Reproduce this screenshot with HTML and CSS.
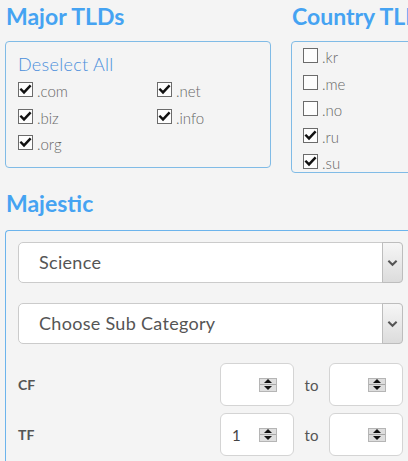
FILE: index.html
```html
<!DOCTYPE html>
<html>
<head>
<meta charset="utf-8">
<link rel="stylesheet" href="styles.css">
</head>
<body>
<div class="top">
  <section class="col">
    <h2 class="title">Major TLDs</h2>
    <div class="box major">
      <div class="deselect">Deselect All</div>
      <div class="grid">
        <div class="item"><span class="cb on"><svg viewBox="0 0 13 13"><path d="M2.2 6.6 L5 9.4 L10.8 3.2"/></svg></span><span class="lbl">.com</span></div>
        <div class="item"><span class="cb on"><svg viewBox="0 0 13 13"><path d="M2.2 6.6 L5 9.4 L10.8 3.2"/></svg></span><span class="lbl">.net</span></div>
        <div class="item"><span class="cb on"><svg viewBox="0 0 13 13"><path d="M2.2 6.6 L5 9.4 L10.8 3.2"/></svg></span><span class="lbl">.biz</span></div>
        <div class="item"><span class="cb on"><svg viewBox="0 0 13 13"><path d="M2.2 6.6 L5 9.4 L10.8 3.2"/></svg></span><span class="lbl">.info</span></div>
        <div class="item"><span class="cb on"><svg viewBox="0 0 13 13"><path d="M2.2 6.6 L5 9.4 L10.8 3.2"/></svg></span><span class="lbl">.org</span></div>
      </div>
    </div>
  </section>
  <section class="col">
    <h2 class="title">Country TLDs</h2>
    <div class="box country">
      <div class="item"><span class="cb"></span><span class="lbl">.kr</span></div>
      <div class="item"><span class="cb"></span><span class="lbl">.me</span></div>
      <div class="item"><span class="cb"></span><span class="lbl">.no</span></div>
      <div class="item"><span class="cb on"><svg viewBox="0 0 13 13"><path d="M2.2 6.6 L5 9.4 L10.8 3.2"/></svg></span><span class="lbl">.ru</span></div>
      <div class="item"><span class="cb on"><svg viewBox="0 0 13 13"><path d="M2.2 6.6 L5 9.4 L10.8 3.2"/></svg></span><span class="lbl">.su</span></div>
    </div>
  </section>
</div>
<h2 class="title maj">Majestic</h2>
<div class="box majbox">
  <div class="select"><span class="stext">Science</span><span class="sbtn"><svg viewBox="0 0 12 8"><path d="M1.5 1.5 L6 6 L10.5 1.5"/></svg></span></div>
  <div class="select"><span class="stext">Choose Sub Category</span><span class="sbtn"><svg viewBox="0 0 12 8"><path d="M1.5 1.5 L6 6 L10.5 1.5"/></svg></span></div>
  <div class="range">
    <span class="rlabel">CF</span>
    <div class="num"><span class="val"></span><span class="spin"><i class="up"></i><i class="dn"></i></span></div>
    <span class="to">to</span>
    <div class="num"><span class="val"></span><span class="spin"><i class="up"></i><i class="dn"></i></span></div>
  </div>
  <div class="range tf">
    <span class="rlabel">TF</span>
    <div class="num"><span class="val">1</span><span class="spin"><i class="up"></i><i class="dn"></i></span></div>
    <span class="to">to</span>
    <div class="num"><span class="val"></span><span class="spin"><i class="up"></i><i class="dn"></i></span></div>
  </div>
</div>
</body>
</html>
```

FILE: styles.css
```css
html {
  overflow: hidden;
  background: #f4f4f4;
}
body {
  margin: 0;
  padding: 0 0 0 5px;
  width: 700px;
  font-family: Lato, "Open Sans", sans-serif;
  color: #555;
  background: #f4f4f4;
}
.top {
  display: flex;
  gap: 20px;
  align-items: flex-start;
}
.col {
  width: 266px;
  flex: none;
}
.title {
  margin: 2px 0 11px 1px;
  font-size: 23px;
  line-height: 28px;
  font-weight: 700;
  color: #45a3f2;
  white-space: nowrap;
}
.box {
  border: 1px solid #80bbe6;
  border-radius: 4px;
  box-sizing: border-box;
}
.major {
  height: 127px;
  padding: 11px 12px 0 12px;
}
.deselect {
  font-size: 18px;
  line-height: 22px;
  color: #4a8edb;
  font-weight: 300;
  letter-spacing: 0.3px;
}
.grid {
  margin-top: 7px;
  display: grid;
  grid-template-columns: 139px 1fr;
}
.item {
  display: flex;
  align-items: flex-start;
  height: 26.5px;
}
.cb {
  width: 15px;
  height: 15px;
  box-sizing: border-box;
  border: 1px solid #6b6b6b;
  background: #fdfdfd;
  flex: none;
  display: block;
}
.cb svg {
  display: block;
  width: 13px;
  height: 13px;
}
.cb path {
  fill: none;
  stroke: #111;
  stroke-width: 2.4;
  stroke-linecap: square;
}
.lbl {
  margin-left: 4px;
  font-size: 15px;
  line-height: 18px;
  color: #666;
  font-weight: 300;
}
.country {
  width: 300px;
  height: 132px;
  padding: 6px 11px 0 11px;
}
.maj {
  margin-top: 16px;
  margin-bottom: 13px;
}
.majbox {
  width: 411px;
  padding: 11px 12px 20px 12px;
  border-color: #6cb4ec;
  border-right: none;
}
.select {
  height: 41px;
  box-sizing: border-box;
  width: 385px;
  display: flex;
  align-items: stretch;
  background: #fff;
  border: 1px solid #cbcbcb;
  border-radius: 5px;
  margin-bottom: 20px;
}
.select + .select {
  margin-bottom: 19px;
}
.stext {
  flex: 1;
  padding-left: 20px;
  font-size: 18px;
  line-height: 39px;
  letter-spacing: 0.3px;
  color: #555;
}
.sbtn {
  width: 21px;
  margin: -1px -1px -1px 0;
  box-sizing: border-box;
  border: 1px solid #bdbdbd;
  border-radius: 0 4px 4px 0;
  background: linear-gradient(#f6f6f6, #dcdcdc);
  display: flex;
  align-items: center;
  justify-content: center;
}
.sbtn svg {
  width: 11px;
  height: 8px;
}
.sbtn path {
  fill: none;
  stroke: #555;
  stroke-width: 2.2;
}
.range {
  display: flex;
  align-items: center;
  width: 385px;
  margin-bottom: 7px;
}
.rlabel {
  flex: 1;
  font-size: 14px;
  font-weight: 700;
  color: #555;
}
.num {
  width: 74px;
  height: 43px;
  box-sizing: border-box;
  background: #fff;
  border: 1px solid #d4d4d4;
  border-radius: 6px;
  display: flex;
  align-items: center;
  padding: 0 16px 0 11px;
}
.val {
  flex: 1;
  font-size: 15px;
  color: #444;
}
.spin {
  width: 18px;
  height: 14px;
  box-sizing: border-box;
  border: 1px solid #b5b5b5;
  background: #dedede;
  display: flex;
  flex-direction: column;
}
.spin i {
  flex: 1;
  position: relative;
  display: block;
}
.spin .up {
  border-bottom: 1px solid #a8a8a8;
}
.spin i::after {
  content: "";
  position: absolute;
  left: 50%;
  top: 50%;
  margin-left: -4px;
  border-left: 4px solid transparent;
  border-right: 4px solid transparent;
}
.spin .up::after {
  margin-top: -2px;
  border-bottom: 4px solid #111;
}
.spin .dn::after {
  margin-top: -2px;
  border-top: 4px solid #111;
}
.to {
  width: 35px;
  text-align: center;
  font-size: 15px;
  color: #555;
}
```
